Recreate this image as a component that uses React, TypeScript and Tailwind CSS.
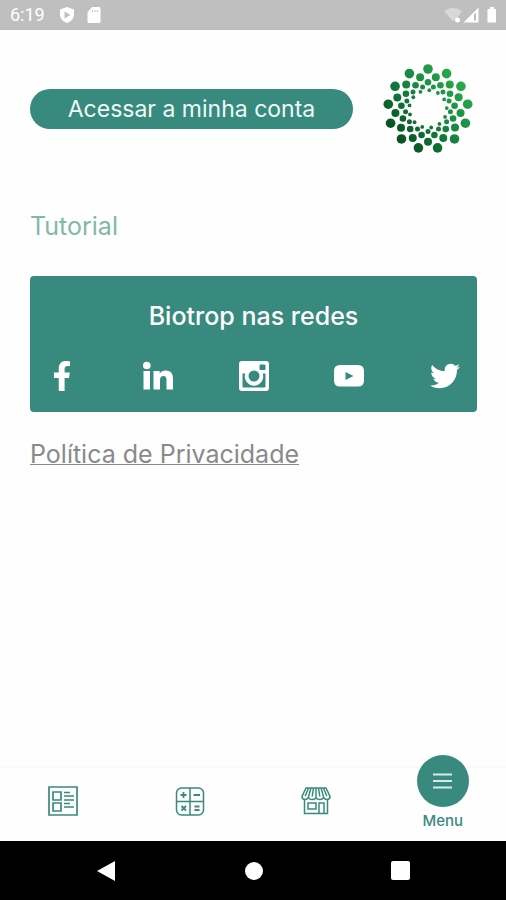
import type { ReactNode } from 'react'
import { FaFacebookF, FaTwitter } from 'react-icons/fa'

/** Rings of the logo: radius, dot size and rotation in degrees. */
const rings = [
  { r: 40, dot: 4.8, turn: 0 },
  { r: 32.8, dot: 4, turn: 13.8 },
  { r: 26.8, dot: 3.3, turn: 0 },
  { r: 22.6, dot: 2.5, turn: 13.8 },
  { r: 18.8, dot: 1.9, turn: 4 },
]

function Logo() {
  const arms = Array.from({ length: 13 }, (_, i) => i)
  return (
    <svg viewBox="-45 -45 90 90" className="size-[90px] shrink-0" role="img" aria-label="Biotrop">
      <defs>
        <linearGradient id="leaf" gradientUnits="userSpaceOnUse" x1="30" y1="-28" x2="-34" y2="28">
          <stop offset="0" stopColor="#27a84a" />
          <stop offset="0.5" stopColor="#158040" />
          <stop offset="1" stopColor="#06501f" />
        </linearGradient>
      </defs>
      <g fill="url(#leaf)">
        {rings.map((ring) =>
          arms.map((i) => {
            const a = ((ring.turn + (i * 360) / 13) * Math.PI) / 180
            return (
              <circle key={`${ring.r}-${i}`} cx={ring.r * Math.sin(a)} cy={-ring.r * Math.cos(a)} r={ring.dot} />
            )
          }),
        )}
      </g>
    </svg>
  )
}

function LinkedinIcon() {
  return (
    <svg viewBox="0 0 30 30" className="size-[30px]" fill="currentColor">
      <circle cx="3.800" cy="4.500" r="3.800" />
      <path d="M.5 10h6.500v18.500H.5ZM10.500 10h6.200v2.500q2-3 6-3 7.300 0 7.300 8v11h-6.500v-9.500q0-4-3-4-3.500 0-3.500 4v9.500h-6.500Z" />
    </svg>
  )
}

function InstagramIcon() {
  return (
    <svg viewBox="0 0 30 30" className="size-[30px]" fill="currentColor">
      <path
        fillRule="evenodd"
        d="M3 0h24a3 3 0 0 1 3 3v24a3 3 0 0 1-3 3H3a3 3 0 0 1-3-3V3a3 3 0 0 1 3-3ZM21.500 3.500a1 1 0 0 0-1 1v3.500a1 1 0 0 0 1 1h4a1 1 0 0 0 1-1V4.500a1 1 0 0 0-1-1ZM3.500 12.500V25.500a1 1 0 0 0 1 1h21a1 1 0 0 0 1-1V12.500h-2.800a9.200 9.200 0 1 1-17.400 0Z"
      />
      <path fillRule="evenodd" d="M15 6.500a8.500 8.500 0 1 1 0 17 8.500 8.500 0 0 1 0-17Zm0 3a5.500 5.500 0 1 0 0 11 5.500 5.500 0 0 0 0-11Z" />
      <circle cx="15" cy="15" r="5.500" fill="#388a7e" />
    </svg>
  )
}

function YoutubeIcon() {
  return (
    <svg viewBox="0 0 30 30" className="size-[30px]" fill="currentColor">
      <path fillRule="evenodd" d="M6 4h18q6 0 6 6v9.500q0 6-6 6H6q-6 0-6-6V10q0-6 6-6Zm5.500 7v8l8-4Z" />
    </svg>
  )
}

function NewsIcon() {
  return (
    <svg viewBox="0 0 30 30" className="size-[30px]" fill="none" stroke="currentColor" strokeWidth="1.700">
      <path d="M1 1h28v28H1ZM5 6h8v8H5ZM5 17h8v8H5Z" />
      <path d="M16 6.500h6M16 10h10M16 14h10M16 17.500h6M16 21h10" />
    </svg>
  )
}

function CalculatorIcon() {
  return (
    <svg viewBox="0 0 30 30" className="size-[30px]" fill="none" stroke="currentColor" strokeWidth="1.500">
      <rect x="1.500" y="2" width="27" height="27" rx="5" />
      <path d="M15 2v27M1.500 15.500h27" />
      <path d="M8.500 6v6M5.500 9h6M18.500 9h6.500M19.500 20.500h5M19.500 24h5M6.500 20l4.500 4.500M11 20l-4.500 4.500" strokeWidth="1.800" />
    </svg>
  )
}

function StoreIcon() {
  return (
    <svg viewBox="0 0 30 30" className="size-[30px]" fill="none" stroke="currentColor" strokeWidth="1.500">
      <path d="M5 2h20l4 8.500q0 3-3 3t-3.500-3q0 3-3.700 3T15 10.500q0 3-3.800 3t-3.700-3q-.5 3-3.500 3t-3-3Z" />
      <path d="M7.500 10.500 10 2M15 10.500V2M22.500 10.500 20 2M11.200 10.500 12.500 2M18.800 10.500 17.500 2M4.200 10 7.500 2M25.800 10 22.500 2" />
      <path d="M3.500 13.500V27.500h23V13.500M7 17h8v6H7ZM18 27.500V17h5v10.500" />
    </svg>
  )
}

const networks: { name: string; icon: ReactNode }[] = [
  { name: 'Facebook', icon: <FaFacebookF size={30} /> },
  { name: 'LinkedIn', icon: <LinkedinIcon /> },
  { name: 'Instagram', icon: <InstagramIcon /> },
  { name: 'YouTube', icon: <YoutubeIcon /> },
  { name: 'Twitter', icon: <FaTwitter size={30} /> },
]

const tabs: { name: string; icon: ReactNode }[] = [
  { name: 'Notícias', icon: <NewsIcon /> },
  { name: 'Calculadora', icon: <CalculatorIcon /> },
  { name: 'Loja', icon: <StoreIcon /> },
]

function StatusBar() {
  return (
    <div className="flex h-[30px] shrink-0 items-center bg-[#bfbfbf] px-[10px] text-white">
      <span className="font-[Roboto,sans-serif] text-[18px] leading-6">6:19</span>
      <svg viewBox="0 0 16 18" className="ml-[14px] h-[18px] w-4" fill="currentColor">
        <path fillRule="evenodd" d="M8 1l7 2.500v6Q14 15 8 17 2 15 1 9.500v-6ZM5.500 5.500v7l6-3.500Z" />
      </svg>
      <svg viewBox="0 0 14 18" className="ml-3 h-[18px] w-[14px]" fill="currentColor">
        <path fillRule="evenodd" d="M5 1h7a1.500 1.500 0 0 1 1.500 1.500v13A1.500 1.500 0 0 1 12 17H2a1.500 1.500 0 0 1-1.500-1.500V6ZM5 4v2h1V4Zm2.500 0v2h1V4ZM10 4v2h1V4Z" />
      </svg>
      <svg viewBox="0 0 56 18" className="ml-auto h-[18px] w-14" fill="currentColor">
        <path d="M4 5q9-6 18 0l-3 4.500-6 6Z" opacity="0.4" />
        <circle cx="17.500" cy="14" r="2.500" />
        <path fillRule="evenodd" d="M23.500 16.500 38.500 1.500v15ZM34 8v6.500h2V7Z" />
        <path d="M47.500 3h2.500V1h4v2h2.500v13.500h-9Z" />
      </svg>
    </div>
  )
}

function SystemNav() {
  return (
    <div className="flex h-[59px] shrink-0 items-center justify-center bg-black text-white">
      <div className="flex w-[62%] items-center justify-between">
        <button aria-label="Voltar">
          <svg viewBox="0 0 20 22" className="h-[22px] w-5" fill="currentColor">
            <path d="M1 11 19 1v20Z" />
          </svg>
        </button>
        <button aria-label="Início" className="size-[18px] rounded-full bg-white" />
        <button aria-label="Recentes" className="size-[19px] rounded-xs bg-white" />
      </div>
    </div>
  )
}

export default function App() {
  return (
    <div className="flex min-h-screen flex-col bg-[#fefefe] font-[Inter,sans-serif]">
      <StatusBar />
      <main className="flex-1 pr-[29px] pl-[30px]">
        <div className="flex items-center gap-[30px] pt-[34px] pr-1">
          <button className="h-10 flex-1 rounded-full bg-[#388a7e] text-[23px] leading-8 text-[#eef9f7]">
            Acessar a minha conta
          </button>
          <Logo />
        </div>
        <a href="#tutorial" className="mt-14 block text-[25px] leading-8 text-[#80b9a8]">
          Tutorial
        </a>
        <section className="mt-[34px] rounded bg-[#388a7e] px-4 pt-6 pb-5 text-white">
          <h2 className="text-center text-[25px] leading-8 font-medium">Biotrop nas redes</h2>
          <div className="mt-7 flex items-center justify-between">
            {networks.map((n) => (
              <a key={n.name} href="#redes" aria-label={n.name} className="flex size-8 items-center justify-center">
                {n.icon}
              </a>
            ))}
          </div>
        </section>
        <a
          href="#privacidade"
          className="mt-[26px] inline-block text-[25px] leading-8 text-[#8a8a8a] underline decoration-1"
        >
          Política de Privacidade
        </a>
      </main>
      <nav className="grid h-[75px] shrink-0 grid-cols-4 border-t-2 border-[#f9f9f9] text-[#388a7e]">
        {tabs.map((t) => (
          <button key={t.name} aria-label={t.name} className="flex items-center justify-center pb-2">
            {t.icon}
          </button>
        ))}
        <button className="-mt-[13px] flex flex-col items-center gap-1 text-[15px] leading-5 font-medium">
          <span className="grid size-[52px] shrink-0 place-items-center rounded-full bg-[#388a7e]">
            <svg viewBox="0 0 20 16" className="h-4 w-5" stroke="#d5ebe7" strokeWidth="2.200">
              <path d="M0 1.500h19M0 8h19M0 14.500h19" />
            </svg>
          </span>
          Menu
        </button>
      </nav>
      <SystemNav />
    </div>
  )
}
